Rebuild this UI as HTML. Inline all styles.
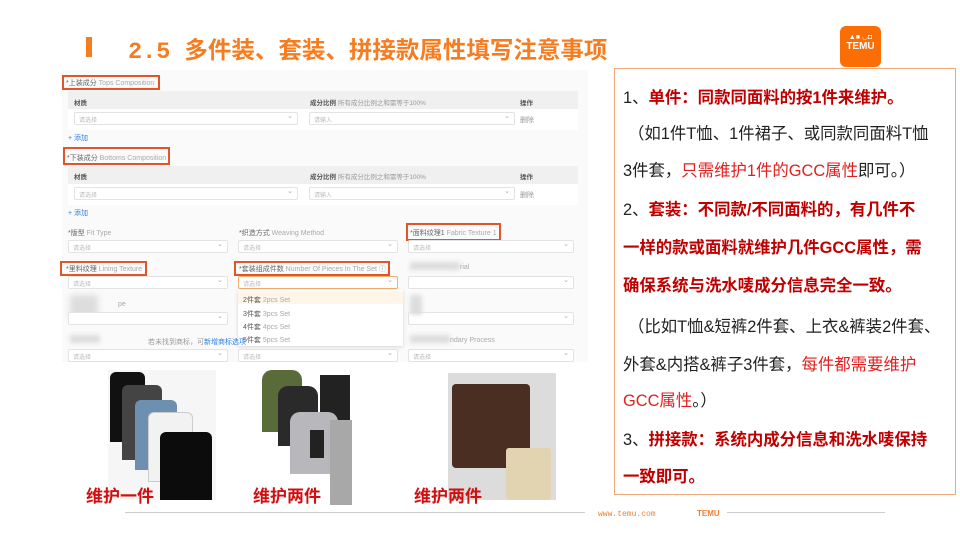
<!DOCTYPE html>
<html><head><meta charset="utf-8"><style>
*{margin:0;padding:0;box-sizing:border-box}
body{width:960px;height:540px;background:#fff;position:relative;overflow:hidden;font-family:"Liberation Sans","Noto Sans CJK SC",sans-serif}
.a{position:absolute}
.t{font-size:7px;color:#999;white-space:nowrap}
.b{font-size:6.5px;color:#555;font-weight:bold}
.red{border:2px solid #e0552a}
.inp{position:absolute;height:13px;border:1px solid #e3e3e3;background:#fff;border-radius:2px;font-size:6px;color:#bbb;padding:2px 4px}
.inp:after{content:"⌄";position:absolute;right:4px;top:-1px;color:#aaa;font-size:7px}
.r{position:absolute;font-size:16.4px;line-height:20px;color:#222;white-space:nowrap;left:623px}
.rb{color:#c00000;font-weight:bold}
.rr{color:#e02020}
.lbl{position:absolute;font-size:17px;color:#d01010;font-weight:bold;top:482px}
</style></head><body>
<div class="a" style="left:86px;top:37px;width:6px;height:20px;background:#f57c1f"></div>
<div class="a" style="left:128px;top:31px;font-size:23.5px;color:#f57c1f;font-weight:bold;font-family:'Liberation Mono','Noto Sans CJK SC',monospace;white-space:nowrap">2.5 <span style="font-family:'Noto Sans CJK SC',sans-serif">多件装、套装、拼接款属性填写注意事项</span></div>
<div class="a" style="left:840px;top:26px;width:41px;height:41px;background:#fb6d05;border-radius:6px;color:#fff;text-align:center">
<div style="font-size:7px;margin-top:7px">▲■ ◡◘</div><div style="font-size:10px;font-weight:bold;line-height:11px">TEMU</div></div>

<div class="a" style="left:62px;top:70px;width:526px;height:292px;background:#fafafa"></div>
<div class="a red" style="left:62px;top:75px;width:98px;height:15px"></div>
<div class="a t" style="left:66px;top:78px;color:#666">*上装成分 <span style="color:#aaa">Tops Composition</span></div>
<div class="a" style="left:68px;top:91px;width:510px;height:18px;background:#f0f0f0"></div>
<div class="a b" style="left:74px;top:97px">材质</div>
<div class="a b" style="left:310px;top:97px">成分比例 <span style="font-weight:normal;color:#999">所有成分比例之和需等于100%</span></div>
<div class="a b" style="left:520px;top:97px">操作</div>
<div class="a" style="left:68px;top:109px;width:510px;height:21px;background:#fff"></div>
<div class="inp" style="left:74px;top:112px;width:224px">请选择</div>
<div class="inp" style="left:309px;top:112px;width:206px">请输入</div>
<div class="a t" style="left:520px;top:115px">删除</div>
<div class="a t" style="left:68px;top:133px;color:#2f7fe0">+ 添加</div>

<div class="a red" style="left:63px;top:147px;width:107px;height:18px"></div>
<div class="a t" style="left:67px;top:153px;color:#666">*下装成分 <span style="color:#aaa">Bottoms Composition</span></div>
<div class="a" style="left:68px;top:166px;width:510px;height:18px;background:#f0f0f0"></div>
<div class="a b" style="left:74px;top:171px">材质</div>
<div class="a b" style="left:310px;top:171px">成分比例 <span style="font-weight:normal;color:#999">所有成分比例之和需等于100%</span></div>
<div class="a b" style="left:520px;top:171px">操作</div>
<div class="a" style="left:68px;top:184px;width:510px;height:21px;background:#fff"></div>
<div class="inp" style="left:74px;top:187px;width:224px">请选择</div>
<div class="inp" style="left:309px;top:187px;width:206px">请输入</div>
<div class="a t" style="left:520px;top:190px">删除</div>
<div class="a t" style="left:68px;top:208px;color:#2f7fe0">+ 添加</div>

<div class="a t" style="left:68px;top:228px;color:#666">*版型 <span style="color:#aaa">Fit Type</span></div>
<div class="a t" style="left:239px;top:228px;color:#666">*织造方式 <span style="color:#aaa">Weaving Method</span></div>
<div class="a red" style="left:406px;top:223px;width:95px;height:18px"></div>
<div class="a t" style="left:410px;top:228px;color:#666">*面料纹理1 <span style="color:#aaa">Fabric Texture 1</span></div>
<div class="inp" style="left:68px;top:240px;width:160px">请选择</div>
<div class="inp" style="left:238px;top:240px;width:160px">请选择</div>
<div class="inp" style="left:408px;top:240px;width:166px">请选择</div>

<div class="a red" style="left:60px;top:261px;width:87px;height:15px"></div>
<div class="a t" style="left:66px;top:264px;color:#666">*里料纹理 <span style="color:#aaa">Lining Texture</span></div>
<div class="a red" style="left:234px;top:261px;width:156px;height:15px"></div>
<div class="a t" style="left:239px;top:264px;color:#666">*套装组成件数 <span style="color:#aaa">Number Of Pieces In The Set ⓘ</span></div>
<div class="a" style="left:410px;top:262px;width:50px;height:8px;background:#ddd;filter:blur(2px)"></div>
<div class="a t" style="left:460px;top:264px;color:#aaa">rial</div>
<div class="inp" style="left:68px;top:276px;width:160px">请选择</div>
<div class="inp" style="left:238px;top:276px;width:160px;border-color:#f0b070">请选择</div>
<div class="inp" style="left:408px;top:276px;width:166px"></div>
<div class="a" style="left:70px;top:295px;width:28px;height:26px;background:#ddd;filter:blur(3px)"></div>
<div class="a t" style="left:118px;top:301px;color:#aaa">pe</div>
<div class="inp" style="left:68px;top:312px;width:160px"></div>
<div class="inp" style="left:408px;top:312px;width:166px"></div>
<div class="a" style="left:410px;top:295px;width:12px;height:20px;background:#ddd;filter:blur(2px)"></div>
<div class="a" style="left:238px;top:290px;width:165px;height:56px;background:#fff;box-shadow:0 1px 4px rgba(0,0,0,.15)"></div>
<div class="a" style="left:238px;top:291px;width:165px;height:13px;background:#fff5e8"></div>
<div class="a t" style="left:243px;top:295px;color:#555">2件套 <span style="color:#aaa">2pcs Set</span></div>
<div class="a t" style="left:243px;top:309px;color:#555">3件套 <span style="color:#aaa">3pcs Set</span></div>
<div class="a t" style="left:243px;top:322px;color:#555">4件套 <span style="color:#aaa">4pcs Set</span></div>
<div class="a t" style="left:243px;top:335px;color:#555">5件套 <span style="color:#aaa">5pcs Set</span></div>
<div class="a" style="left:70px;top:335px;width:30px;height:8px;background:#ddd;filter:blur(2px)"></div>
<div class="a t" style="left:148px;top:337px">若未找到商标，可<span style="color:#2f7fe0">新增商标选项</span></div>
<div class="a" style="left:410px;top:335px;width:40px;height:8px;background:#ddd;filter:blur(2px)"></div>
<div class="a t" style="left:450px;top:337px;color:#aaa">ndary Process</div>
<div class="inp" style="left:68px;top:349px;width:160px">请选择</div>
<div class="inp" style="left:238px;top:349px;width:160px">请选择</div>
<div class="inp" style="left:408px;top:349px;width:166px">请选择</div>

<div class="a" style="left:108px;top:370px;width:108px;height:130px;background:#f6f6f6"></div>
<div class="a" style="left:110px;top:372px;width:35px;height:70px;background:#111;border-radius:6px 6px 0 0"></div>
<div class="a" style="left:122px;top:385px;width:40px;height:75px;background:#444;border-radius:6px 6px 0 0"></div>
<div class="a" style="left:135px;top:400px;width:42px;height:70px;background:#6d8fb0;border-radius:6px 6px 0 0"></div>
<div class="a" style="left:148px;top:412px;width:45px;height:70px;background:#f2f2f2;border:1px solid #ccc;border-radius:6px 6px 0 0"></div>
<div class="a" style="left:160px;top:432px;width:52px;height:68px;background:#0c0c0c;border-radius:6px 6px 0 0"></div>
<div class="a" style="left:262px;top:370px;width:40px;height:62px;background:#5a6b3a;border-radius:10px 10px 0 0"></div>
<div class="a" style="left:278px;top:386px;width:40px;height:60px;background:#2a2a2a;border-radius:10px 10px 0 0"></div>
<div class="a" style="left:320px;top:375px;width:30px;height:70px;background:#222"></div>
<div class="a" style="left:290px;top:412px;width:48px;height:62px;background:#b8b8bc;border-radius:10px 10px 0 0"></div>
<div class="a" style="left:310px;top:430px;width:14px;height:28px;background:#222"></div>
<div class="a" style="left:330px;top:420px;width:22px;height:85px;background:#a8a8a8"></div>
<div class="a" style="left:448px;top:373px;width:108px;height:127px;background:#dcdcdc"></div>
<div class="a" style="left:452px;top:384px;width:78px;height:84px;background:#4a2e22;border-radius:4px"></div>
<div class="a" style="left:506px;top:448px;width:45px;height:52px;background:#e2d4b0;border-radius:3px"></div>
<div class="lbl" style="left:86px">维护一件</div>
<div class="lbl" style="left:253px">维护两件</div>
<div class="lbl" style="left:414px">维护两件</div>

<div class="a" style="left:614px;top:68px;width:342px;height:427px;border:1px solid #f0a878"></div>
<div class="r" style="top:88px">1、<span class="rb">单件：同款同面料的按1件来维护。</span></div>
<div class="r" style="top:124px;left:628px">（如1件T恤、1件裙子、或同款同面料T恤</div>
<div class="r" style="top:161px">3件套，<span class="rr">只需维护1件的GCC属性</span>即可。）</div>
<div class="r" style="top:200px">2、<span class="rb">套装：不同款/不同面料的，有几件不</span></div>
<div class="r rb" style="top:238px">一样的款或面料就维护几件GCC属性，需</div>
<div class="r rb" style="top:276px">确保系统与洗水唛成分信息完全一致。</div>
<div class="r" style="top:317px;left:628px">（比如T恤&amp;短裤2件套、上衣&amp;裤装2件套、</div>
<div class="r" style="top:355px">外套&amp;内搭&amp;裤子3件套，<span class="rr">每件都需要维护</span></div>
<div class="r rr" style="top:391px">GCC属性<span style="color:#222">。）</span></div>
<div class="r" style="top:430px">3、<span class="rb">拼接款：系统内成分信息和洗水唛保持</span></div>
<div class="r rb" style="top:467px">一致即可。</div>

<div class="a" style="left:125px;top:512px;width:460px;height:1px;background:#ccc"></div>
<div class="a" style="left:727px;top:512px;width:158px;height:1px;background:#ccc"></div>
<div class="a" style="left:598px;top:510px;font-size:8px;color:#f08030;font-family:'Liberation Mono',monospace">www.temu.com</div>
<div class="a" style="left:697px;top:509px;font-size:8px;color:#f08030;font-weight:bold">TEMU</div>
</body></html>
